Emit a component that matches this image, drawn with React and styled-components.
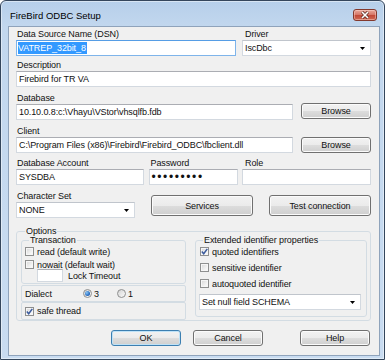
import React from 'react';
import styled, { createGlobalStyle } from 'styled-components';

const GlobalStyle = createGlobalStyle`
	* { box-sizing: border-box; }
	html, body { margin: 0; padding: 0; background: #ffffff; }
	body {
		font-family: "Liberation Sans", Arial, sans-serif;
		font-size: 9px;
		letter-spacing: -0.1px;
		color: #111;
	}
`;

const Arrow = () => (
	<svg width="5" height="3" viewBox="0 0 5 3">
		<polygon points="0,0 5,0 2.5,3" fill="#000" />
	</svg>
);

const Check = () => (
	<svg width="7" height="7" viewBox="0 0 7 7">
		<path d="M0.8 3.6 L2.7 5.8 L6.3 0.9" fill="none" stroke="#3b5b9d" strokeWidth="1.5" />
	</svg>
);

const CheckBox = ({ checked, children }) => (
	<CheckRow>
		<Box>{checked && <Check />}</Box>
		<span>{children}</span>
	</CheckRow>
);

const Radio = ({ checked, children, width }) => (
	<RadioItem $width={width}>
		<Circle>{checked && <Dot />}</Circle>
		<span>{children}</span>
	</RadioItem>
);

const App = () => {
	return (
		<>
			<GlobalStyle />
			<Window>
				<TitleBar>
					<Title>FireBird ODBC Setup</Title>
					<CloseButton>
						<svg width="10" height="8" viewBox="0 0 10 8">
							<path d="M2 1 L8 7 M8 1 L2 7" stroke="#5b2a22" strokeWidth="3" />
							<path d="M2 1 L8 7 M8 1 L2 7" stroke="#ffffff" strokeWidth="1.6" />
						</svg>
					</CloseButton>
				</TitleBar>
				<Client>
					<Row $cols="220px 129px">
						<Col>
							<Label>Data Source Name (DSN)</Label>
							<TextBox $focused>
								<Selected>VATREP_32bit_8</Selected>
							</TextBox>
						</Col>
						<Col>
							<Label $indent={3}>Driver</Label>
							<Combo>
								IscDbc
								<Arrow />
							</Combo>
						</Col>
					</Row>
					<Row $cols="1fr" $gap={4}>
						<Col>
							<Label>Description</Label>
							<TextBox>Firebird for TR VA</TextBox>
						</Col>
					</Row>
					<Row $cols="277px 70px" $gap={6}>
						<Col>
							<Label>Database</Label>
							<TextBox>10.10.0.8:c:\Vhayu\VStor\vhsqlfb.fdb</TextBox>
						</Col>
						<Button $lift={1}>Browse</Button>
					</Row>
					<Row $cols="277px 70px" $gap={6}>
						<Col>
							<Label>Client</Label>
							<TextBox>C:\Program Files (x86)\Firebird\Firebird_ODBC\fbclient.dll</TextBox>
						</Col>
						<Button>Browse</Button>
					</Row>
					<Row $cols="128px 89px 129px" $gap={5}>
						<Col>
							<Label>Database Account</Label>
							<TextBox>SYSDBA</TextBox>
						</Col>
						<Col>
							<Label $indent={2}>Password</Label>
							<TextBox $dots>•••••••••</TextBox>
						</Col>
						<Col>
							<Label $indent={3}>Role</Label>
							<TextBox />
						</Col>
					</Row>
					<Row $cols="119px 102px 102px" $gap={6}>
						<Col>
							<Label>Character Set</Label>
							<Combo>
								NONE
								<Arrow />
							</Combo>
						</Col>
						<Button $tall $lift={2}>Services</Button>
						<Button $tall $lift={2}>Test connection</Button>
					</Row>

					<Group $outer>
						<Legend $offset={4}>Options</Legend>
						<OptionsBody>
							<LeftColumn>
								<Group>
									<Legend $offset={4}>Transaction</Legend>
									<Stack $top={2} $gap={4}>
										<CheckBox>read (default write)</CheckBox>
										<CheckBox>nowait (default wait)</CheckBox>
									</Stack>
									<TimeoutRow>
										<SmallBox />
										<span>Lock Timeout</span>
									</TimeoutRow>
								</Group>
								<Panel $height={17} $gap={1}>
									<PanelLabel>Dialect</PanelLabel>
									<Radio checked width={34}>3</Radio>
									<Radio>1</Radio>
								</Panel>
								<Panel $height={18}>
									<CheckBox checked>safe thread</CheckBox>
								</Panel>
							</LeftColumn>
							<ExtGroup>
								<Legend $offset={3}>Extended identifier properties</Legend>
								<Stack $top={2} $gap={7}>
									<CheckBox checked>quoted identifiers</CheckBox>
									<CheckBox>sensitive identifier</CheckBox>
									<CheckBox>autoquoted identifier</CheckBox>
								</Stack>
								<NullCombo>
									Set null field SCHEMA
									<Arrow />
								</NullCombo>
							</ExtGroup>
						</OptionsBody>
					</Group>

					<ButtonBar>
						<Button $default>OK</Button>
						<Button $space={12}>Cancel</Button>
						<Button $space={37}>Help</Button>
					</ButtonBar>
				</Client>
			</Window>
		</>
	);
};

export default App;

const Window = styled.div`
	width: 385px;
	height: 360px;
	border: 1px solid #34465c;
	border-radius: 6px 6px 0 0;
	background: linear-gradient(180deg, #b6cfea 0px, #c2d7ee 26px, #c9dcf1 100%);
	box-shadow: inset 0 0 0 1px rgba(255, 255, 255, 0.45);
	display: flex;
	flex-direction: column;
	overflow: hidden;
`;

const TitleBar = styled.div`
	height: 25px;
	flex-shrink: 0;
	display: flex;
	justify-content: space-between;
	align-items: flex-start;
	padding: 8px 7px 0 9px;
`;

const Title = styled.span`
	font-size: 9.5px;
	line-height: 12px;
	letter-spacing: 0;
	margin-top: 1px;
	color: #000;
`;

const CloseButton = styled.div`
	width: 24px;
	height: 12px;
	border: 1px solid #83392d;
	border-radius: 3px;
	background: linear-gradient(180deg, #e9a99c 0%, #d7796a 45%, #c24a39 55%, #cf6a55 100%);
	box-shadow: inset 0 0 0 1px rgba(255, 220, 210, 0.45);
	display: flex;
	align-items: center;
	justify-content: center;
`;

const Client = styled.div`
	flex: 1;
	margin: 0 4px 3px 7px;
	border: 1px solid #8fa3bb;
	background: #f0f0f0;
	padding: 2px 8px 0 7px;
	display: flex;
	flex-direction: column;
`;

const Row = styled.div`
	display: grid;
	grid-template-columns: ${(p) => p.$cols};
	justify-content: space-between;
	align-items: end;
	margin-top: ${(p) => p.$gap || 0}px;
`;

const Col = styled.div`
	display: flex;
	flex-direction: column;
	min-width: 0;
`;

const Label = styled.div`
	height: 11px;
	line-height: 11px;
	padding-left: ${(p) => (p.$indent ?? 1)}px;
	white-space: nowrap;
`;

const TextBox = styled.div`
	height: 16px;
	background: #fff;
	border: 1px solid ${(p) => (p.$focused ? '#7eb4ea' : '#d3d9e0')};
	border-top-color: ${(p) => (p.$focused ? '#569de5' : '#abadb3')};
	display: flex;
	align-items: center;
	padding-left: 2px;
	white-space: nowrap;
	overflow: hidden;
	font-size: ${(p) => (p.$dots ? '12px' : '9px')};
	letter-spacing: ${(p) => (p.$dots ? '1.6px' : '-0.1px')};
`;

const Selected = styled.span`
	background: #3399ff;
	color: #fff;
	line-height: 12px;
	padding: 0 1px 0 0;
	margin-left: -1px;
`;

const Combo = styled.div`
	height: 16px;
	background: #fff;
	border: 1px solid #d3d9e0;
	border-top-color: #c0c5cc;
	display: flex;
	align-items: center;
	justify-content: space-between;
	padding: 0 5px 0 2px;
	white-space: nowrap;
`;

const Button = styled.div`
	height: ${(p) => (p.$tall ? 21 : 16)}px;
	width: 70px;
	margin-bottom: ${(p) => p.$lift || 0}px;
	margin-left: ${(p) => p.$space || 0}px;
	border: 1px solid ${(p) => (p.$default ? '#3c7fb1' : '#707070')};
	border-radius: 3px;
	background: linear-gradient(180deg, #f2f2f2 0%, #ebebeb 50%, #dddddd 51%, #cfcfcf 100%);
	box-shadow: inset 0 0 0 1px ${(p) => (p.$default ? '#bfe2f7' : '#fbfbfb')};
	display: flex;
	align-items: center;
	justify-content: center;
	white-space: nowrap;
	${Row} & {
		width: auto;
	}
`;

const Group = styled.fieldset`
	margin: ${(p) => (p.$outer ? '9px 0 0 0' : '0')};
	padding: ${(p) => (p.$outer ? '0 3px 0 4px' : '0 2px 1px 3px')};
	border: 1px solid #d3dce3;
	border-radius: 3px;
	min-width: 0;
`;

const ExtGroup = styled(Group)`
	width: 172px;
	padding: 0 4px 6px 4px;
	align-self: flex-start;
`;

const Legend = styled.legend`
	padding: 0 1px;
	margin-left: ${(p) => p.$offset}px;
	line-height: 9px;
	height: 9px;
`;

const OptionsBody = styled.div`
	display: flex;
	justify-content: space-between;
	align-items: flex-start;
`;

const LeftColumn = styled.div`
	width: 165px;
	display: flex;
	flex-direction: column;
`;

const Stack = styled.div`
	display: flex;
	flex-direction: column;
	gap: ${(p) => p.$gap}px;
	padding-top: ${(p) => p.$top}px;
`;

const CheckRow = styled.div`
	display: flex;
	align-items: center;
	gap: 3px;
	height: 9px;
	white-space: nowrap;
`;

const Box = styled.div`
	width: 9px;
	height: 9px;
	border: 1px solid #8e8f8f;
	background: linear-gradient(135deg, #d6d6d6 0%, #f4f4f4 70%, #ffffff 100%);
	box-shadow: inset 0 0 0 1px #f6f6f6;
	display: flex;
	align-items: center;
	justify-content: center;
	flex-shrink: 0;
`;

const TimeoutRow = styled.div`
	display: flex;
	align-items: center;
	gap: 5px;
	margin-left: 12px;
`;

const SmallBox = styled.div`
	width: 26px;
	height: 13px;
	background: #fff;
	border: 1px solid #d3d9e0;
	border-top-color: #abadb3;
`;

const Panel = styled.div`
	height: ${(p) => p.$height}px;
	margin-top: ${(p) => p.$gap || 0}px;
	border: 1px solid #d3dce3;
	border-radius: 2px;
	display: flex;
	align-items: center;
	padding-left: 3px;
`;

const PanelLabel = styled.span`
	width: 58px;
`;

const RadioItem = styled.div`
	width: ${(p) => (p.$width ? `${p.$width}px` : 'auto')};
	display: flex;
	align-items: center;
	gap: 2px;
`;

const Circle = styled.div`
	width: 9px;
	height: 9px;
	border-radius: 50%;
	border: 1px solid #8e8f8f;
	background: linear-gradient(135deg, #d4d4d4, #fafafa);
	display: flex;
	align-items: center;
	justify-content: center;
`;

const Dot = styled.div`
	width: 5px;
	height: 5px;
	border-radius: 50%;
	background: radial-gradient(circle at 35% 35%, #8cc6f2 0%, #2a6fc4 60%, #123f86 100%);
`;

const NullCombo = styled(Combo)`
	width: 162px;
	margin: 6px 0 0 -1px;
`;

const ButtonBar = styled.div`
	display: flex;
	justify-content: flex-end;
	margin-top: 9px;
	padding-right: 1px;
`;
